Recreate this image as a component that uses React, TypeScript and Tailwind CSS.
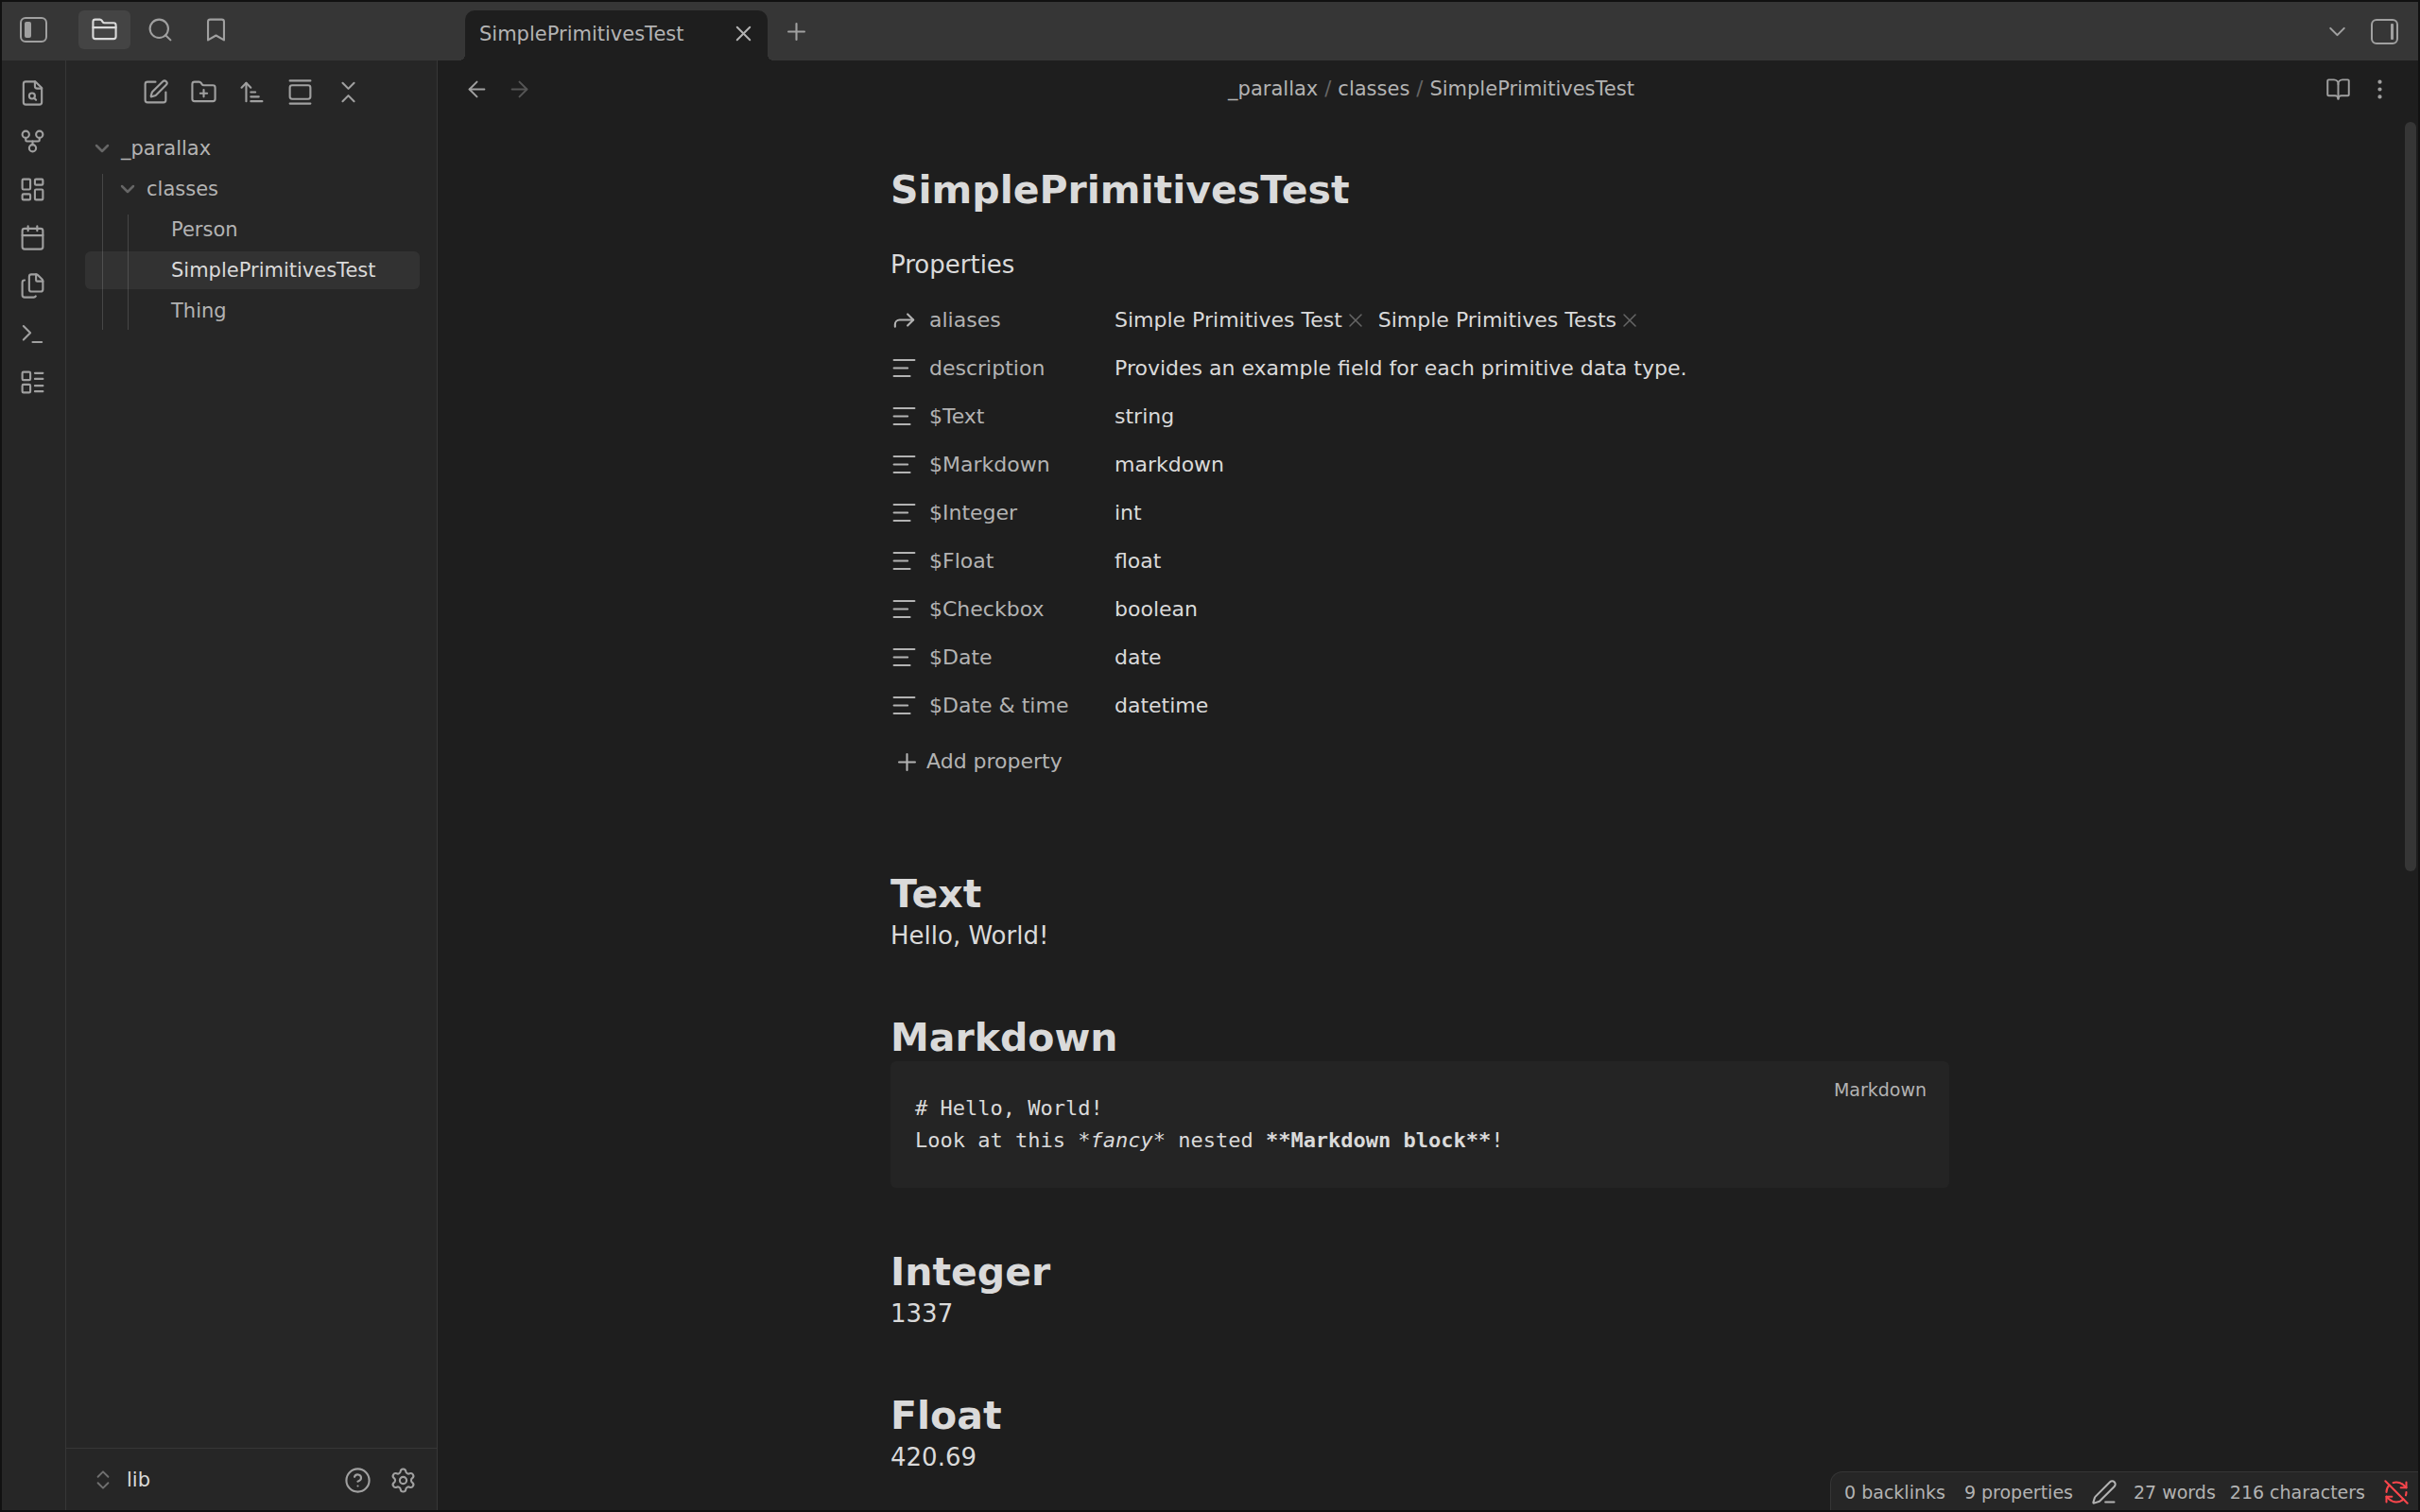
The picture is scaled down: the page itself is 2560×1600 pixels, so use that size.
import React from "react";
import {
  ArrowLeft, ArrowRight, ArrowUpNarrowWide, BookOpen, Bookmark, Calendar, ChevronDown, ChevronsDownUp,
  ChevronsUpDown, CircleHelp, EllipsisVertical, Files, FolderClosed, FolderPlus, Forward, GalleryVertical,
  GitFork, LayoutDashboard, LayoutList, PenLine, Plus, RefreshCwOff, Search, Settings, SquarePen, Terminal, X,
} from "lucide-react";

function Svg({ children }: { children: React.ReactNode }) {
  return (
    <svg viewBox="0 0 24 24" fill="none" stroke="currentColor" strokeWidth={1.75} strokeLinecap="round" strokeLinejoin="round" className="size-[29px] shrink-0" aria-hidden="true">
      {children}
    </svg>
  );
}

const FileSearchIcon = () => (
  <Svg>
    <path d="M14.5 2H6a2 2 0 0 0-2 2v16a2 2 0 0 0 2 2h12a2 2 0 0 0 2-2V7.5Z" />
    <path d="M14 2v4a2 2 0 0 0 2 2h4" />
    <circle cx="11.5" cy="14.5" r="2.5" />
    <path d="M13.3 16.3 15 18" />
  </Svg>
);

const TextLinesIcon = () => (
  <Svg>
    <path d="M21 5H3M15 12H3M17 19H3" />
  </Svg>
);

function SidebarToggleIcon({ side }: { side: "left" | "right" }) {
  return (
    <svg viewBox="0 0 29 27" fill="none" stroke="currentColor" strokeWidth={2} className="h-[27px] w-[29px]" aria-hidden="true">
      <rect x="1" y="1" width="27" height="25" rx="5" />
      {side === "left" ? (
        <rect x="5" y="5" width="7" height="17" rx="2" fill="currentColor" stroke="none" />
      ) : (
        <rect x="21" y="5" width="3" height="17" rx="1" fill="currentColor" stroke="none" />
      )}
    </svg>
  );
}

const icon = { size: 29, strokeWidth: 1.75 };

type IconButtonProps = { label: string; tone?: string; className?: string; children: React.ReactNode };

function IconButton({ label, tone = "text-[#a0a0a0]", className = "", children }: IconButtonProps) {
  return (
    <button type="button" aria-label={label} className={`flex shrink-0 items-center justify-center ${tone} ${className}`}>
      {children}
    </button>
  );
}

function TitleBar() {
  return (
    <header className="flex h-[62px] shrink-0 items-start bg-[#363636]">
      <div className="flex w-[461px] items-center pt-[9px] pl-[17px]">
        <IconButton label="Toggle left sidebar" className="h-10 w-8"><SidebarToggleIcon side="left" /></IconButton>
        <div className="flex gap-1 pl-8">
          <IconButton label="Files" tone="text-[#dadada]" className="h-[41px] w-[55px] rounded-md bg-[#444444]"><FolderClosed {...icon} /></IconButton>
          <IconButton label="Search" className="h-[41px] w-[55px]"><Search {...icon} /></IconButton>
          <IconButton label="Bookmarks" className="h-[41px] w-[55px]"><Bookmark {...icon} /></IconButton>
        </div>
      </div>
      <div className="flex min-w-0 flex-1 items-end self-stretch pl-[29px]">
        <div role="tab" className="relative flex h-[53px] w-80 items-center rounded-t-[10px] bg-[#1e1e1e] pr-2.5 pb-1 pl-[15px]">
          <span className="absolute bottom-0 -left-1.5 size-1.5 bg-[radial-gradient(circle_at_0_0,#363636_6px,#1e1e1e_6px)]" />
          <span className="absolute -right-1.5 bottom-0 size-1.5 bg-[radial-gradient(circle_at_100%_0,#363636_6px,#1e1e1e_6px)]" />
          <span className="flex-1 text-[21px] leading-8">SimplePrimitivesTest</span>
          <IconButton label="Close tab" tone="text-[#b3b3b3]" className="size-8"><X size={27} strokeWidth={1.75} /></IconButton>
        </div>
        <IconButton label="New tab" className="ml-2.5 h-[62px] w-10"><Plus {...icon} /></IconButton>
      </div>
      <div className="flex h-[62px] items-center gap-2 pr-[21px]">
        <IconButton label="Tab list" className="size-10"><ChevronDown {...icon} /></IconButton>
        <IconButton label="Toggle right sidebar" className="h-10 w-[37px] justify-end"><SidebarToggleIcon side="right" /></IconButton>
      </div>
    </header>
  );
}

function Ribbon() {
  const items = [
    { label: "Quick switcher", node: <FileSearchIcon /> },
    { label: "Graph view", node: <GitFork {...icon} /> },
    { label: "Canvas", node: <LayoutDashboard {...icon} /> },
    { label: "Daily note", node: <Calendar {...icon} /> },
    { label: "Templates", node: <Files {...icon} /> },
    { label: "Command palette", node: <Terminal {...icon} /> },
    { label: "Database", node: <LayoutList {...icon} /> },
  ];
  return (
    <nav aria-label="Ribbon" className="flex w-[68px] shrink-0 flex-col items-center gap-[11px] border-r border-[#363636] pt-3.5 pr-0.5">
      {items.map((i) => (
        <IconButton key={i.label} label={i.label} className="size-10">{i.node}</IconButton>
      ))}
    </nav>
  );
}

function Explorer() {
  return (
    <aside className="flex w-[393px] shrink-0 flex-col border-r border-[#363636]">
      <div className="flex justify-center gap-[11px] pt-[13px] pb-[20px]">
        <IconButton label="New note" className="size-10"><SquarePen {...icon} /></IconButton>
        <IconButton label="New folder" className="size-10"><FolderPlus {...icon} /></IconButton>
        <IconButton label="Change sort order" className="size-10"><ArrowUpNarrowWide {...icon} /></IconButton>
        <IconButton label="Auto-reveal current file" className="size-10"><GalleryVertical {...icon} /></IconButton>
        <IconButton label="Collapse all" className="size-10"><ChevronsDownUp {...icon} /></IconButton>
      </div>
      <div className="flex flex-1 flex-col pr-[18px] pl-5 text-[21px] leading-10">
        <button type="button" className="mb-[3px] flex h-10 items-center gap-2 pl-1.5 text-left">
          <ChevronDown size={24} strokeWidth={2.5} className="text-[#666666]" />_parallax
        </button>
        <div className="relative">
          <span className="absolute top-1 bottom-0 left-[18px] w-px bg-white/15" />
          <button type="button" className="mb-[3px] flex h-10 w-full items-center gap-2 pl-[33px] text-left">
            <ChevronDown size={24} strokeWidth={2.5} className="text-[#666666]" />classes
          </button>
          <div className="relative flex flex-col gap-[3px]">
            <span className="absolute top-1 bottom-0 left-[45px] w-px bg-white/15" />
            <button type="button" className="h-10 pl-[91px] text-left">Person</button>
            <button type="button" className="h-10 rounded-md bg-white/6 pl-[91px] text-left text-[#dadada]">SimplePrimitivesTest</button>
            <button type="button" className="h-10 pl-[91px] text-left">Thing</button>
          </div>
        </div>
      </div>
      <div className="flex h-[66px] items-center border-t border-[#363636] pt-px pr-4 pl-[26px]">
        <button type="button" className="flex flex-1 items-center gap-3 text-left text-[21px] leading-8 text-[#dadada]">
          <ChevronsUpDown size={26} strokeWidth={1.75} className="text-[#707070]" />lib
        </button>
        <IconButton label="Help" className="size-10"><CircleHelp {...icon} /></IconButton>
        <IconButton label="Settings" className="ml-2 size-10"><Settings {...icon} /></IconButton>
      </div>
    </aside>
  );
}

const properties = [
  ["description", "Provides an example field for each primitive data type."],
  ["$Text", "string"],
  ["$Markdown", "markdown"],
  ["$Integer", "int"],
  ["$Float", "float"],
  ["$Checkbox", "boolean"],
  ["$Date", "date"],
  ["$Date & time", "datetime"],
];

function Alias({ name }: { name: string }) {
  return (
    <span className="flex items-center">
      {name}
      <IconButton label={`Remove ${name}`} tone="text-[#666666]" className="ml-0.5 w-6"><X size={24} strokeWidth={1.5} /></IconButton>
    </span>
  );
}

function Section({ title, children }: { title: string; children: React.ReactNode }) {
  return (
    <section className="mb-16">
      <h1 className="text-[41px] leading-[50px] font-bold">{title}</h1>
      {children}
    </section>
  );
}

function Note() {
  return (
    <article className="mx-auto w-full max-w-[1120px] pt-[52px] text-[26px] leading-[38px] text-[#dadada]">
      <h1 className="text-[41px] leading-[50px] font-bold">SimplePrimitivesTest</h1>
      <h2 className="mt-[35px] mb-[14px]">Properties</h2>
      <dl className="text-[22px]">
        <div className="flex h-[51px] items-center">
          <dt className="flex w-[237px] items-center gap-3 text-[#b3b3b3]"><Forward {...icon} />aliases</dt>
          <dd className="flex gap-3"><Alias name="Simple Primitives Test" /><Alias name="Simple Primitives Tests" /></dd>
        </div>
        {properties.map(([key, value]) => (
          <div key={key} className="flex h-[51px] items-center">
            <dt className="flex w-[237px] items-center gap-3 text-[#b3b3b3]"><TextLinesIcon />{key}</dt>
            <dd>{value}</dd>
          </div>
        ))}
      </dl>
      <button type="button" className="mt-[14px] mb-[95px] flex h-10 items-center gap-1.5 pl-[3px] text-[22px] text-[#b3b3b3]">
        <Plus {...icon} />Add property
      </button>
      <Section title="Text"><p>Hello, World!</p></Section>
      <Section title="Markdown">
        <div className="relative rounded-md bg-[#242424] pt-[33px] pr-6 pb-[33px] pl-[26px]">
          <pre className="font-['DejaVu_Sans_Mono',monospace] text-[22px] leading-[34px]">
            {"# Hello, World!\nLook at this *"}<em>fancy</em>{"* nested "}<strong>**Markdown block**</strong>!
          </pre>
          <button type="button" className="absolute top-3 right-6 text-[19px] leading-9 text-[#b3b3b3]">Markdown</button>
        </div>
      </Section>
      <Section title="Integer"><p>1337</p></Section>
      <Section title="Float"><p>420.69</p></Section>
    </article>
  );
}

function StatusBar() {
  return (
    <footer className="absolute right-0 bottom-0 flex h-[41px] items-center rounded-tl-[13px] border-t border-l border-[#363636] bg-[#262626] pt-px pr-[9px] pl-3.5 text-[19px] leading-8">
      <span>0 backlinks</span>
      <span className="ml-5">9 properties</span>
      <IconButton label="Editing mode" tone="text-[#b3b3b3]" className="ml-[19px]"><PenLine size={28} strokeWidth={1.75} /></IconButton>
      <span className="ml-[17px]">27 words</span>
      <span className="ml-[15px]">216 characters</span>
      <IconButton label="Sync disabled" tone="text-[#fb464c]" className="ml-[19px]"><RefreshCwOff size={28} strokeWidth={1.75} /></IconButton>
    </footer>
  );
}

export default function App() {
  return (
    <div className="relative flex h-screen flex-col overflow-hidden border-2 border-[#111111] bg-[#1e1e1e] font-['DejaVu_Sans',sans-serif] text-[#b3b3b3]">
      <TitleBar />
      <div className="flex min-h-0 flex-1">
        <div className="flex bg-[#262626]"><Ribbon /><Explorer /></div>
        <main className="flex min-w-0 flex-1 flex-col">
          <div className="flex h-[60px] shrink-0 items-center justify-between pr-[21px] pl-[21px]">
            <div className="flex gap-[5px]">
              <IconButton label="Back" className="size-10"><ArrowLeft size={27} strokeWidth={1.75} /></IconButton>
              <IconButton label="Forward" tone="text-[#555555]" className="size-10"><ArrowRight size={27} strokeWidth={1.75} /></IconButton>
            </div>
            <nav aria-label="Breadcrumb" className="flex gap-[7px] pl-1.5 text-[21px] leading-8">
              <a href="#parallax">_parallax</a><span className="text-[#666666]">/</span>
              <a href="#classes">classes</a><span className="text-[#666666]">/</span>
              <span>SimplePrimitivesTest</span>
            </nav>
            <div className="flex gap-1">
              <IconButton label="Reading view" className="size-10"><BookOpen size={27} strokeWidth={1.75} /></IconButton>
              <IconButton label="More options" className="size-10"><EllipsisVertical size={27} strokeWidth={1.75} /></IconButton>
            </div>
          </div>
          <div className="flex min-h-0 flex-1">
            <div className="min-w-0 flex-1 overflow-hidden"><Note /></div>
            <div className="w-[17px] pt-[5px] pl-[3px]"><div className="h-[54%] w-3 rounded-full bg-[#363636]" /></div>
          </div>
        </main>
      </div>
      <StatusBar />
    </div>
  );
}
